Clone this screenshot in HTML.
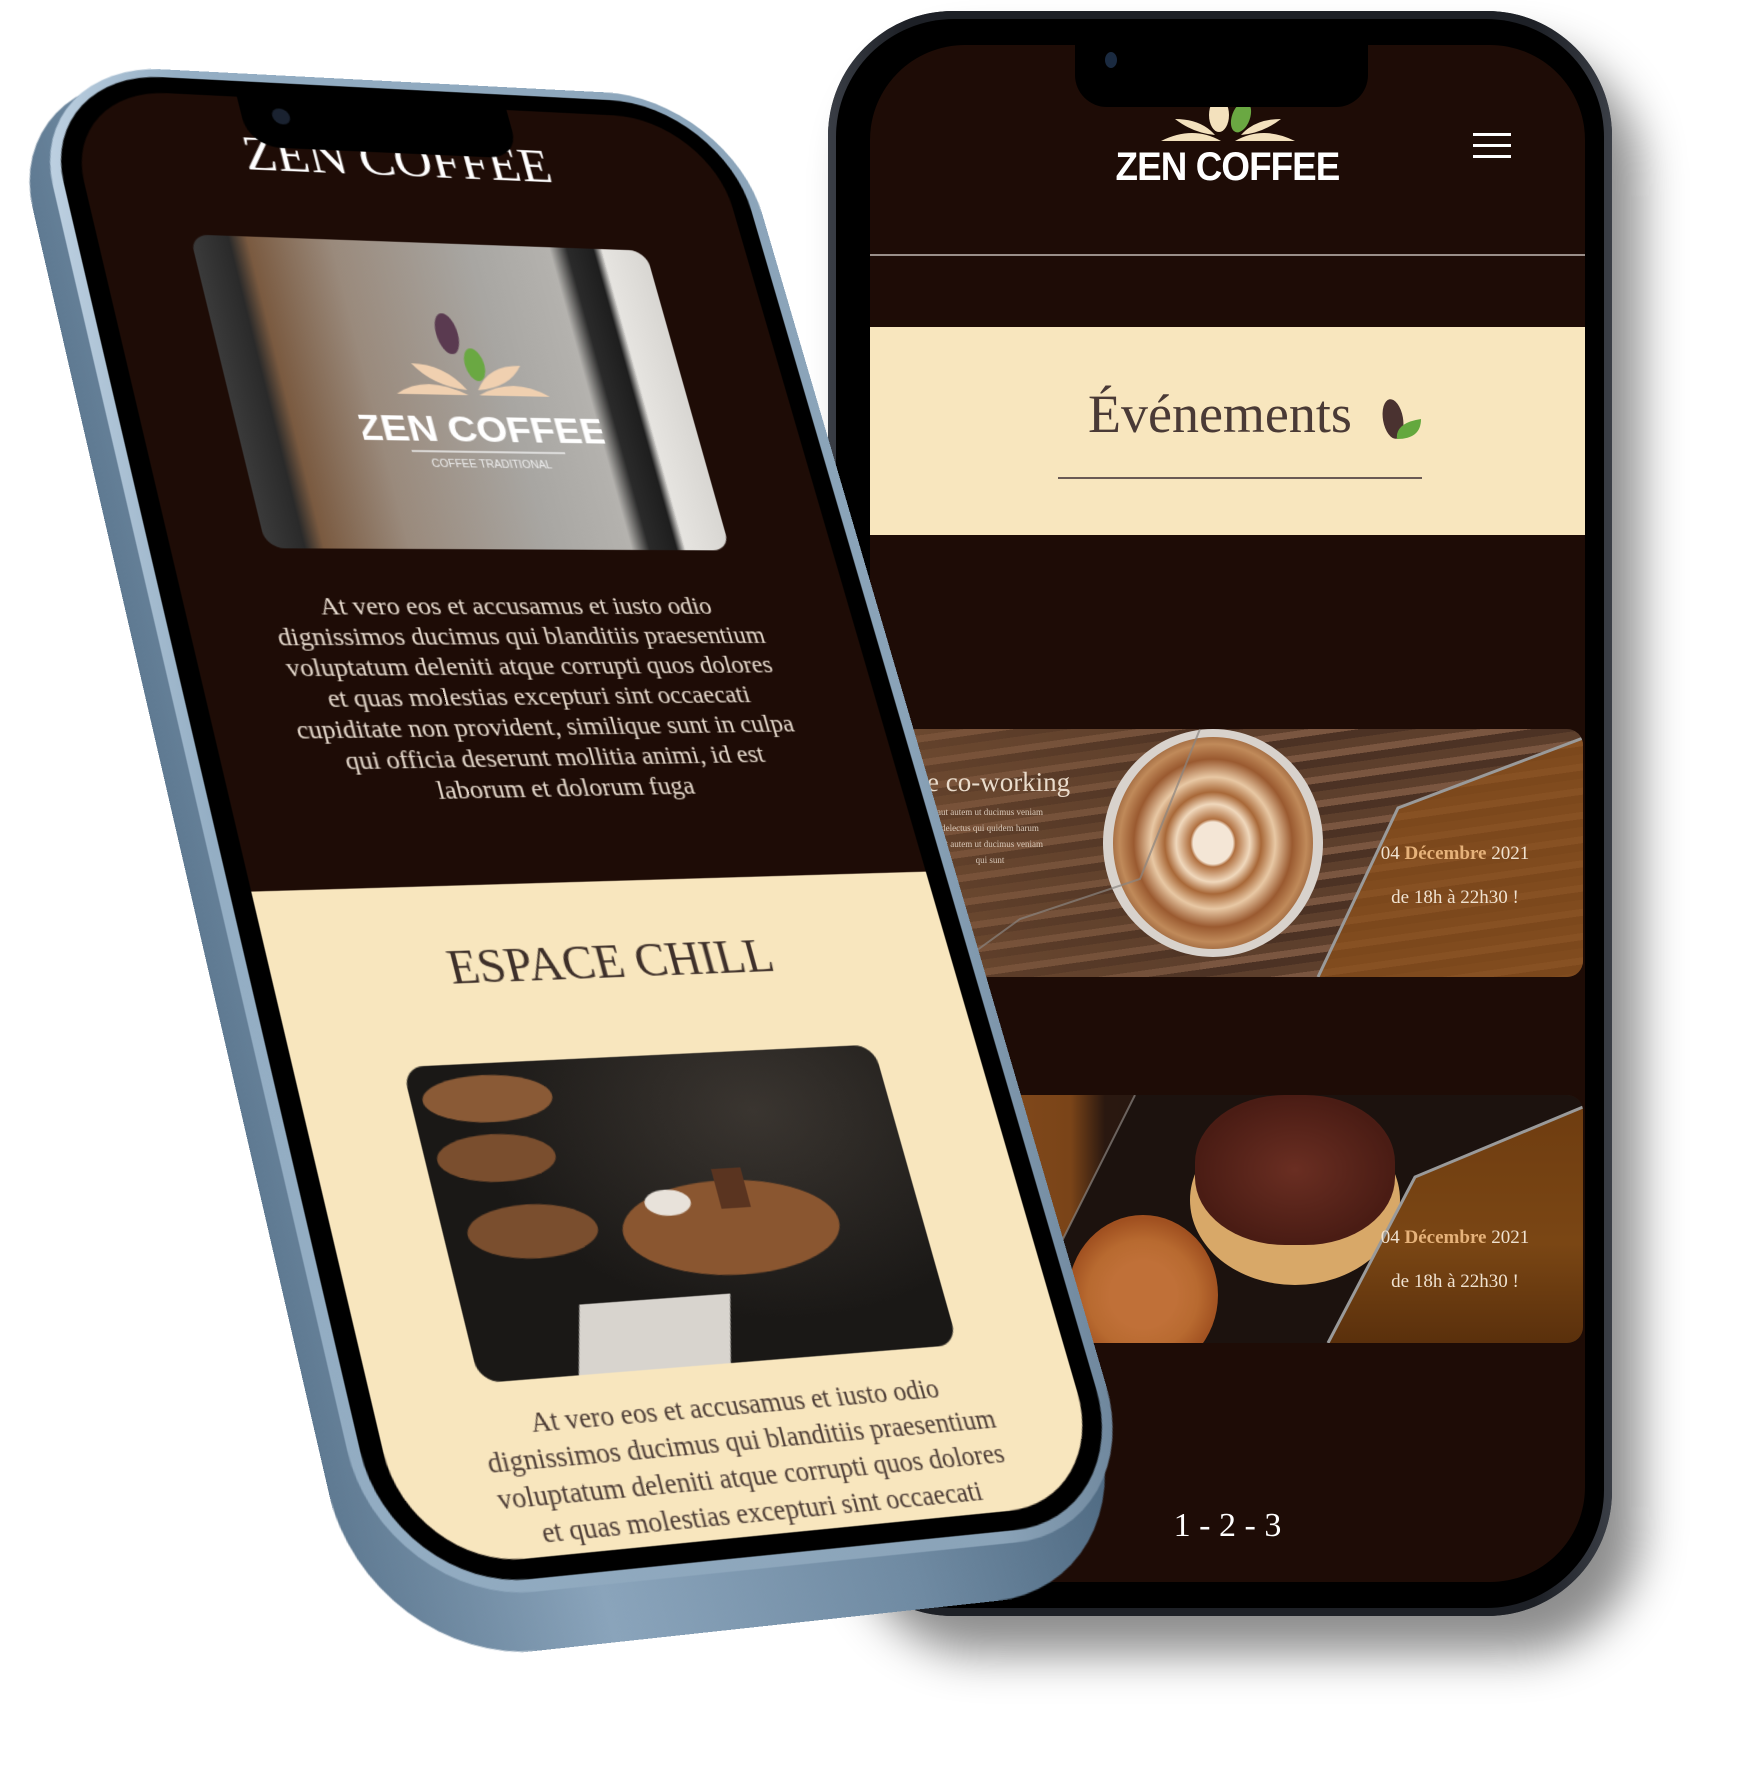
<!DOCTYPE html>
<html><head><meta charset="utf-8">
<style>
*{margin:0;padding:0;box-sizing:border-box}
html,body{width:1750px;height:1775px;background:#fff;overflow:hidden;position:relative;font-family:"Liberation Serif",serif}
.abs{position:absolute}
#rshadow{left:828px;top:11px;width:784px;height:1605px;border-radius:125px;box-shadow:28px 38px 45px rgba(0,0,0,.45);background:#22252b}
#rbody{left:828px;top:11px;width:784px;height:1605px;border-radius:125px;background:linear-gradient(90deg,#3a3e46,#1d2026 10%,#1d2026 90%,#3a3e46)}
#rbez{left:836px;top:19px;width:768px;height:1589px;border-radius:118px;background:#000}
#rscr{left:870px;top:45px;width:715px;height:1537px;border-radius:95px;background:#1e0c06;overflow:hidden}
#rnotch{left:1075px;top:40px;width:293px;height:67px;background:#000;border-radius:0 0 32px 32px}
.cream{background:#f8e6be}
.card{position:absolute;left:30px;width:683px;height:248px;border-radius:16px;overflow:hidden}
.date{position:absolute;right:18px;width:220px;text-align:center;color:#f0e2d0;font-size:19px}
.date b{color:#e6b27a}
#lp{left:0;top:0;width:600px;height:1300px;transform-origin:0 0;transform:matrix3d(1.15442,0.066817,0,0.00011233,0.232185,1.001415,0,-0.00008827,0,0,1,0,62,88,0,1)}
#lp>div{position:absolute}
</style></head><body>

<div class="abs" id="rshadow"></div>
<div class="abs" id="rbody"></div>
<div class="abs" id="rbez"></div>
<div class="abs" id="rscr">
  <svg class="abs" style="left:273px;top:52px" width="170" height="50" viewBox="0 0 170 50">
    <path d="M18 44 Q50 28 78 44 Z" fill="#f3e1bd"/>
    <path d="M92 44 Q120 28 152 44 Z" fill="#f3e1bd"/>
    <path d="M32 22 Q58 22 72 38 Q50 36 32 22Z" fill="#f3e1bd"/>
    <path d="M138 22 Q112 22 98 38 Q120 36 138 22Z" fill="#f3e1bd"/>
    <ellipse cx="76" cy="18" rx="10" ry="17" fill="#f3e1bd"/>
    <ellipse cx="98" cy="20" rx="9" ry="16" fill="#6aa842" transform="rotate(20 98 20)"/>
  </svg>
  <div class="abs" style="left:0;width:715px;top:100px;text-align:center;color:#fff;font:bold 40px 'Liberation Sans Narrow','Liberation Sans',sans-serif;letter-spacing:-1px;transform:scaleX(.92)">ZEN COFFEE</div>
  <div class="abs" style="left:603px;top:88px;width:38px;height:3px;background:#fff;box-shadow:0 11px 0 #fff,0 22px 0 #fff"></div>
  <div class="abs" style="left:0;top:209px;width:715px;height:2px;background:#9a8f8a"></div>
  <div class="abs cream" style="left:0;top:282px;width:715px;height:208px"></div>
  <div class="abs" style="left:218px;top:338px;font-size:54px;color:#4a3a36">Événements</div>
  <svg class="abs" style="left:505px;top:350px" width="50" height="50" viewBox="0 0 50 50">
    <ellipse cx="18" cy="24" rx="10" ry="20" fill="#4a3230" transform="rotate(-10 18 24)"/>
    <path d="M22 44 Q20 28 46 24 Q46 44 22 44Z" fill="#64a83e"/>
  </svg>
  <div class="abs" style="left:188px;top:432px;width:364px;height:2px;background:#6a5a55"></div>

  <div class="card" style="top:684px;background:repeating-linear-gradient(172deg,#5d3f2c 0 9px,#7a5640 9px 16px,#4c3224 16px 24px)">
    <div class="abs" style="left:0;top:0;width:300px;height:248px;background:linear-gradient(90deg,rgba(120,80,50,.55),rgba(90,60,40,.2))"></div>
    <div class="abs" style="left:203px;top:0;width:220px;height:228px;border-radius:50%;background:#d8d2cc"></div>
    <div class="abs" style="left:213px;top:8px;width:200px;height:212px;border-radius:50%;background:radial-gradient(ellipse at 50% 50%,#f4e6d6 0 14%,#b07040 16%,#f0d8bc 26%,#a86838 34%,#e8c8a4 44%,#9a5a30 56%,#c08a5a 66%,#7a4220 80%)"></div>
    <div class="abs" style="left:0;top:0;width:683px;height:248px;background:rgba(140,80,25,.75);clip-path:polygon(683px 9px,498px 79px,418px 248px,683px 248px)"></div>
    <svg class="abs" style="left:0;top:0" width="683" height="248"><polyline points="683,9 498,79 418,248" fill="none" stroke="#9a9a9a" stroke-width="3"/><polyline points="300,0 240,150 120,190 40,248" fill="none" stroke="#8a8580" stroke-width="2" opacity=".7"/></svg>
    <div class="abs" style="left:-45px;top:38px;color:#eadccc;font-size:27px">Journée co-working</div>
    <div class="abs" style="left:0;top:75px;width:180px;color:#d8c8b8;font-size:9px;line-height:16px;text-align:center">aut autem ut ducimus veniam<br>delectus qui quidem harum<br>aut autem ut ducimus veniam<br>qui sunt</div>
    <div class="date" style="top:114px"><span>04 </span><b>Décembre</b> 2021</div>
    <div class="date" style="top:158px">de 18h à 22h30 !</div>
  </div>

  <div class="card" style="top:1050px;background:linear-gradient(90deg,#8a5020 0,#7a4418 25%,#2a1810 30%,#1e120c 70%,#3a2010)">
    <div class="abs" style="left:0;top:0;width:683px;height:248px;background:#1c120e;clip-path:polygon(235px 0,683px 0,683px 248px,130px 248px,160px 150px)"></div>
    <div class="abs" style="left:168px;top:120px;width:150px;height:160px;border-radius:50%;background:radial-gradient(circle,#c07038 0 30%,#b86a30 50%,#a05020 70%)"></div>
    <div class="abs" style="left:290px;top:20px;width:210px;height:170px;border-radius:50%;background:#d8a868"></div>
    <div class="abs" style="left:295px;top:0;width:200px;height:150px;border-radius:45%;background:radial-gradient(ellipse,#6a2e22,#4a1c14 70%)"></div>
    <div class="abs" style="left:0;top:0;width:683px;height:248px;background:linear-gradient(180deg,#6e3c10,#7a4614 60%,#5a300c);clip-path:polygon(683px 12px,515px 82px,428px 248px,683px 248px)"></div>
    <svg class="abs" style="left:0;top:0" width="683" height="248"><polyline points="683,12 515,82 428,248" fill="none" stroke="#9a9a9a" stroke-width="3"/><polyline points="235,0 160,150 120,190" fill="none" stroke="#8a8580" stroke-width="2" opacity=".7"/></svg>
    <div class="abs" style="left:10px;top:30px;color:#eadccc;font-size:24px">Volonté</div>
    <div class="date" style="top:132px"><span>04 </span><b>Décembre</b> 2021</div>
    <div class="date" style="top:176px">de 18h à 22h30 !</div>
  </div>

  <div class="abs" style="left:0;width:715px;top:1462px;text-align:center;color:#fff;font-size:34px">1 - 2 - 3</div>
</div>
<div class="abs" id="rnotch"><div class="abs" style="left:30px;top:12px;width:12px;height:16px;border-radius:50%;background:#1a2a40"></div></div>

<div class="abs" id="lp">
  <div style="left:-50px;top:-14px;width:660px;height:1385px;border-radius:135px;background:linear-gradient(90deg,#5f7a92,#8aa4bb 30%,#6f8aa2 70%,#4f6a82)"></div>
  <div style="left:-28px;top:-24px;width:656px;height:1350px;border-radius:122px;background:linear-gradient(100deg,#c4d6e6,#94aec4 15%,#8aa3b8 85%,#6b8399)"></div>
  <div style="left:-18px;top:-16px;width:636px;height:1332px;border-radius:110px;background:#000"></div>
  <div style="left:0;top:0;width:600px;height:1300px;border-radius:92px;overflow:hidden;background:#1e0c06">
    <div class="abs" style="left:0;top:30px;width:580px;text-align:center;color:#fff;font-size:48px">ZEN COFFEE</div>
    <div class="abs" style="left:82px;top:140px;width:420px;height:298px;border-radius:16px;overflow:hidden;background:linear-gradient(90deg,#3a3a3a 0,#2a2a2a 8%,#7a5a40 12%,#9a8a7c 30%,#a8a6a2 60%,#b4b2ae 78%,#2a2a2a 82%,#1e1e1e 88%,#e6e4e0 90%,#d8d6d2)">
      <svg class="abs" style="left:110px;top:60px" width="220" height="170" viewBox="0 0 220 170">
        <ellipse cx="100" cy="30" rx="10" ry="20" fill="#5a3a50"/>
        <ellipse cx="118" cy="60" rx="9" ry="16" fill="#6aa842"/>
        <path d="M40 90 Q70 70 105 90Z" fill="#f0d0b0"/><path d="M115 90 Q150 70 180 90Z" fill="#f0d0b0"/>
        <path d="M60 60 Q90 60 105 85 Q75 82 60 60Z" fill="#f0d0b0"/><path d="M160 60 Q130 60 115 85 Q145 82 160 60Z" fill="#f0d0b0"/>
        <text x="110" y="135" text-anchor="middle" fill="#fff" font-family="Liberation Sans Narrow,Liberation Sans,sans-serif" font-weight="bold" font-size="36">ZEN COFFEE</text>
        <line x1="40" y1="145" x2="180" y2="145" stroke="#eee" stroke-width="1.5"/>
        <text x="110" y="160" text-anchor="middle" fill="#eee" font-family="Liberation Sans,sans-serif" font-size="10">COFFEE TRADITIONAL</text>
      </svg>
    </div>
    <div class="abs" style="left:-20px;width:625px;top:478px;text-align:center;color:#e8dccf;font-size:23px;line-height:28px">At vero eos et accusamus et iusto odio<br>dignissimos ducimus qui blanditiis praesentium<br>voluptatum deleniti atque corrupti quos dolores<br>et quas molestias excepturi sint occaecati<br>cupiditate non provident, similique sunt in culpa<br>qui officia deserunt mollitia animi, id est<br>laborum et dolorum fuga</div>
    <div class="abs cream" style="left:0;top:744px;width:600px;height:560px"></div>
    <div class="abs" style="left:0;width:585px;top:792px;text-align:center;color:#3e302a;font-size:42px">ESPACE CHILL</div>
    <div class="abs" style="left:90px;top:898px;width:415px;height:262px;border-radius:18px;overflow:hidden;background:radial-gradient(ellipse at 70% 20%,#3a3530,#1a1816 60%)">
      <div class="abs" style="left:10px;top:10px;width:110px;height:40px;border-radius:50%;background:#8a5a36"></div>
      <div class="abs" style="left:10px;top:60px;width:100px;height:40px;border-radius:50%;background:#7a4e2e"></div>
      <div class="abs" style="left:20px;top:120px;width:110px;height:45px;border-radius:50%;background:#7a4e2e"></div>
      <div class="abs" style="left:150px;top:110px;width:190px;height:80px;border-radius:50%;background:#8a5630"></div>
      <div class="abs" style="left:175px;top:115px;width:40px;height:22px;border-radius:50%;background:#e8e2da"></div>
      <div class="abs" style="left:240px;top:100px;width:26px;height:34px;background:#5a3420"></div>
      <div class="abs" style="left:90px;top:205px;width:130px;height:60px;background:#d8d4ce;transform:skewX(-15deg)"></div>
    </div>
    <div class="abs" style="left:-20px;width:640px;top:1180px;text-align:center;color:#4a3a34;font-size:23px;line-height:29px">At vero eos et accusamus et iusto odio<br>dignissimos ducimus qui blanditiis praesentium<br>voluptatum deleniti atque corrupti quos dolores<br>et quas molestias excepturi sint occaecati<br>cupiditate non provident, similique sunt in culpa</div>
  </div>
  <div style="left:155px;top:-4px;width:250px;height:54px;background:#000;border-radius:0 0 28px 28px"><div class="abs" style="left:28px;top:14px;width:16px;height:16px;border-radius:50%;background:#1a2230"></div></div>
</div>
</body></html>
